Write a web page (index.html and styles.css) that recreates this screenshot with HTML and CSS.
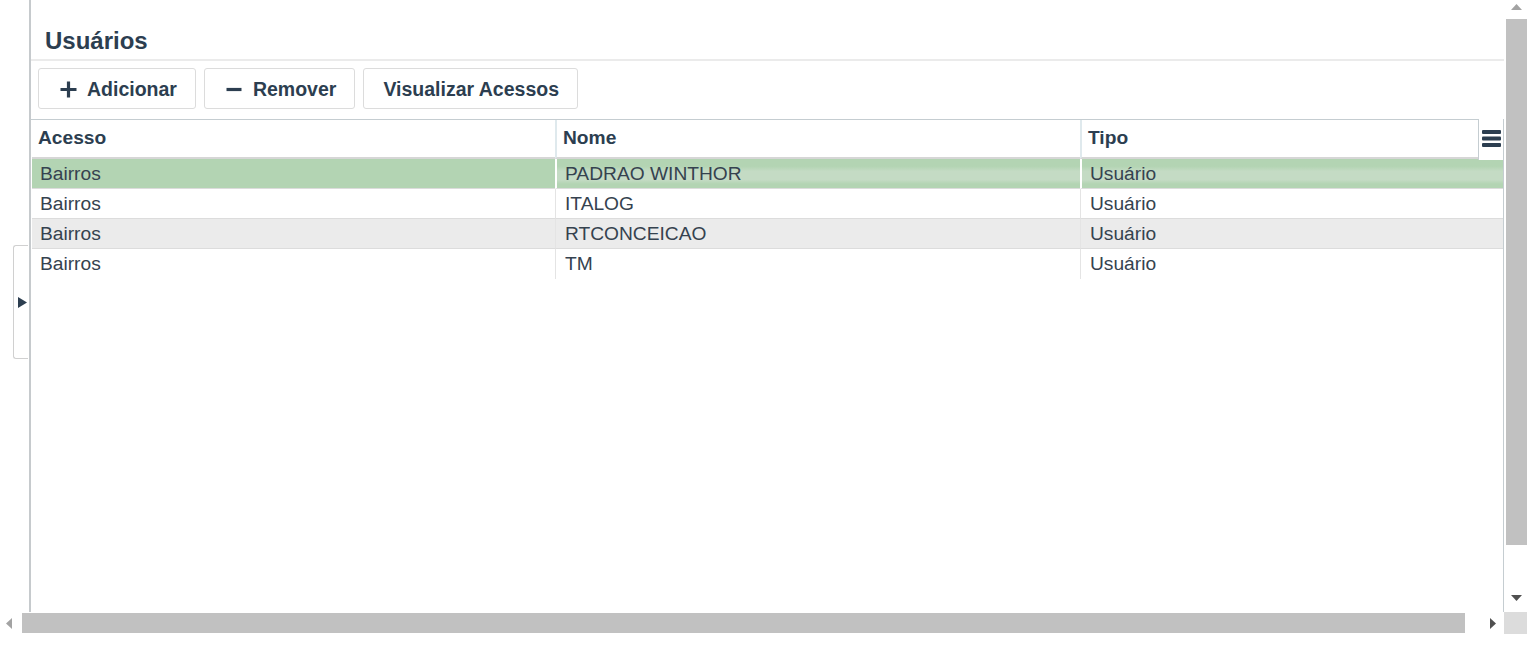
FILE: index.html
```html
<!DOCTYPE html>
<html lang="pt-BR">
<head>
  <meta charset="UTF-8">
  <meta name="viewport" content="width=device-width, initial-scale=1.0">
  <title>Usuários</title>
  <link rel="stylesheet" href="styles.css">
</head>
<body>

<div class="frame">
  <div class="workspace">
    <div class="gutter">
      <div class="side-tab">
        <svg width="9" height="11" viewBox="0 0 9 11"><polygon points="0,0 9,5.5 0,11" fill="#2c3e50"/></svg>
      </div>
    </div>

    <div class="panel">
      <h2 class="panel-title">Usuários</h2>

      <div class="toolbar">
        <button class="btn">
          <span class="btn-icon">
            <svg width="17" height="17" viewBox="0 0 17 17"><path d="M8.5 0.5v16M0.5 8.5h16" stroke="#2c3e50" stroke-width="3.2"/></svg>
          </span>
          Adicionar
        </button>
        <button class="btn">
          <span class="btn-icon">
            <svg width="16" height="17" viewBox="0 0 16 17"><path d="M0.5 8.5h15" stroke="#2c3e50" stroke-width="3.2"/></svg>
          </span>
          Remover
        </button>
        <button class="btn">Visualizar Acessos</button>
      </div>

      <div class="grid-wrap">
        <table class="grid">
          <colgroup>
            <col class="col-acesso">
            <col class="col-nome">
            <col>
          </colgroup>
          <thead>
            <tr>
              <th>Acesso</th>
              <th>Nome</th>
              <th>Tipo</th>
            </tr>
          </thead>
          <tbody>
            <tr class="selected">
              <td>Bairros</td>
              <td class="band">PADRAO WINTHOR</td>
              <td class="band">Usuário</td>
            </tr>
            <tr>
              <td>Bairros</td>
              <td>ITALOG</td>
              <td>Usuário</td>
            </tr>
            <tr class="alt">
              <td>Bairros</td>
              <td>RTCONCEICAO</td>
              <td>Usuário</td>
            </tr>
            <tr>
              <td>Bairros</td>
              <td>TM</td>
              <td>Usuário</td>
            </tr>
          </tbody>
        </table>
        <div class="grid-menu">
          <svg width="19" height="17" viewBox="0 0 19 17">
            <rect x="0" y="0" width="19" height="4" rx="1" fill="#2c3e50"/>
            <rect x="0" y="6.5" width="19" height="4" rx="1" fill="#2c3e50"/>
            <rect x="0" y="13" width="19" height="4" rx="1" fill="#2c3e50"/>
          </svg>
        </div>
      </div>
    </div>
  </div>

  <div class="vscroll">
    <div class="arrow arrow-up">
      <svg width="11" height="6" viewBox="0 0 11 6"><polygon points="5.5,0 11,6 0,6" fill="#a3a3a3"/></svg>
    </div>
    <div class="vthumb"></div>
    <div class="spacer"></div>
    <div class="arrow arrow-down">
      <svg width="11" height="6" viewBox="0 0 11 6"><polygon points="0,0 11,0 5.5,6" fill="#505050"/></svg>
    </div>
  </div>

  <div class="hscroll">
    <div class="arrow arrow-left">
      <svg width="6" height="11" viewBox="0 0 6 11"><polygon points="6,0 6,11 0,5.5" fill="#a3a3a3"/></svg>
    </div>
    <div class="hthumb"></div>
    <div class="spacer"></div>
    <div class="arrow arrow-right">
      <svg width="6" height="11" viewBox="0 0 6 11"><polygon points="0,0 6,5.5 0,11" fill="#505050"/></svg>
    </div>
  </div>
  <div class="corner"></div>
</div>

</body>
</html>
```

FILE: styles.css
```css
body {
  font-family: "Liberation Sans", Arial, sans-serif;
  font-size: 19.2px;
  color: #35424f;
  background-color: #fff;
  margin: 0;
  padding: 0;
}
.frame {
  display: grid;
  grid-template-columns: 1fr 23px;
  grid-template-rows: 612px 22px;
  height: 649px;
}
.workspace {
  display: flex;
}
.gutter {
  width: 29px;
  flex-shrink: 0;
}
.side-tab {
  margin: 245px 0 0 13px;
  width: 15px;
  height: 114px;
  border: 1px solid #d0d0d0;
  border-right: none;
  border-radius: 3px 0 0 3px;
  display: flex;
  align-items: center;
  padding-left: 4px;
  box-sizing: border-box;
}
.panel {
  flex: 1;
  display: flex;
  flex-direction: column;
  border-left: 2px solid #c6cacd;
}
.panel-title {
  margin: 0;
  padding: 27px 14px 4px;
  font-size: 24px;
  line-height: 28px;
  font-weight: bold;
  color: #2c3e50;
  border-bottom: 2px solid #ebebeb;
}
.toolbar {
  display: flex;
  gap: 8px;
  margin: 7px 0 0 7px;
}
.btn {
  display: inline-flex;
  align-items: center;
  padding: 10px 18px 8px 19px;
  font-family: inherit;
  font-size: 19.5px;
  font-weight: bold;
  line-height: 21px;
  color: #2c3e50;
  background-color: #fff;
  border: 1px solid #dcdcdc;
  border-radius: 3px;
}
.btn-icon {
  width: 20px;
  margin-right: 9px;
  display: flex;
  justify-content: center;
}
.grid-wrap {
  position: relative;
  flex: 1;
  margin-top: 10px;
  border-top: 1px solid #c5cdd1;
  border-right: 1px solid #c5cdd1;
}
.grid {
  margin-left: 1px;
  width: calc(100% - 1px);
  table-layout: fixed;
  border-collapse: separate;
  border-spacing: 0;
}
.col-acesso {
  width: 523px;
}
.col-nome {
  width: 525px;
}
.grid th {
  height: 39px;
  padding: 0 6px 2px;
  box-sizing: border-box;
  text-align: left;
  font-weight: bold;
  color: #2c3e50;
  border-bottom: 2px solid #d6d6d6;
}
.grid th + th {
  border-left: 2px solid #dfe9ed;
}
.grid td {
  height: 30px;
  padding: 0 8px;
  box-sizing: border-box;
  line-height: 22px;
  white-space: nowrap;
  border-bottom: 1px solid #dcdcdc;
}
.grid td + td {
  border-left: 1px solid #e4e4e4;
  padding-left: 9px;
}
.grid tbody tr:last-child td {
  border-bottom: none;
}
.grid tr.selected td {
  background-color: #b3d4b3;
}
.grid tr.selected td + td {
  border-left: 2px solid #fff;
  padding-left: 8px;
}
.grid tr.selected td.band {
  background-image: linear-gradient(#b3d4b3 25%, #c4dbc4 42%, #c4dbc4 72%, #b3d4b3 86%);
}
.grid tr.alt td {
  background-color: #ebebeb;
}
.grid-menu {
  position: absolute;
  top: -1px;
  right: 0;
  width: 25px;
  height: 41px;
  background-color: #fff;
  border-left: 1px solid #c5cdd1;
  display: flex;
  justify-content: center;
  padding-top: 11px;
  box-sizing: border-box;
}
.vscroll {
  display: flex;
  flex-direction: column;
  padding-left: 2px;
}
.arrow {
  display: flex;
  align-items: center;
  justify-content: center;
}
.arrow-up {
  height: 19px;
  align-items: flex-start;
  padding-top: 4px;
  box-sizing: border-box;
}
.vthumb {
  height: 526px;
  background-color: #c1c1c1;
}
.spacer {
  flex: 1;
}
.arrow-down {
  height: 17px;
  margin-bottom: 6px;
}
.hscroll {
  display: flex;
  align-items: stretch;
  padding-top: 1px;
}
.arrow-left {
  width: 22px;
  justify-content: flex-start;
  padding-left: 6px;
  box-sizing: border-box;
}
.hthumb {
  width: 1443px;
  height: 20px;
  background-color: #c1c1c1;
}
.arrow-right {
  width: 22px;
}
.corner {
  background-color: #dcdcdc;
}
```
